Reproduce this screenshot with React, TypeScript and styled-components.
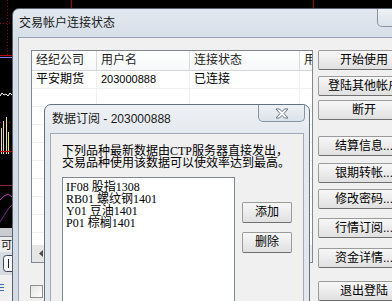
import React from "react";
import styled, { createGlobalStyle } from "styled-components";

const UI_FONT = `"Liberation Sans", "Noto Sans CJK SC", sans-serif`;
const SONG_FONT = `"Liberation Serif", "Noto Sans CJK SC", serif`;

const GlobalStyle = createGlobalStyle`
  html, body {
    margin: 0;
    padding: 0;
    background: #000;
  }
  body {
    font-family: ${UI_FONT};
    font-size: 12px;
    color: #000;
  }
`;

interface Column {
  title: string;
  width: number;
}

const columns: Column[] = [
  { title: "经纪公司", width: 65 },
  { title: "用户名", width: 93 },
  { title: "连接状态", width: 110 },
  { title: "用户类型", width: 90 },
];

const accounts = [["平安期货", "203000888", "已连接", ""]];

// gap above each button, px
const actions = [
  { label: "开始使用", top: 0 },
  { label: "登陆其他帐户", top: 6 },
  { label: "断开", top: 4 },
  { label: "结算信息...", top: 16 },
  { label: "银期转帐...", top: 7 },
  { label: "修改密码...", top: 6 },
  { label: "行情订阅...", top: 9 },
  { label: "资金详情...", top: 10 },
  { label: "退出登陆", top: 13 },
];

const subscriptions = ["IF08 股指1308", "RB01 螺纹钢1401", "Y01 豆油1401", "P01 棕榈1401"];

function CloseIcon() {
  return (
    <svg width="14" height="11" viewBox="0 0 14 11">
      <polygon
        points="1,1 4.5,1 7,3.6 9.5,1 13,1 9,5.5 13,10 9.5,10 7,7.4 4.5,10 1,10 5,5.5"
        fill="#fff"
        stroke="#6a7582"
        strokeWidth="1"
        strokeLinejoin="round"
      />
    </svg>
  );
}

function Backdrop() {
  return (
    <BackdropSvg viewBox="0 0 392 301">
      <rect width="392" height="301" fill="#000" />
      <line x1="71.5" y1="0" x2="71.5" y2="8" stroke="#b00000" />
      <line x1="313.5" y1="0" x2="313.5" y2="8" stroke="#b00000" />
      <line x1="7.5" y1="0" x2="7.5" y2="60" stroke="#9a0000" strokeDasharray="1 2" />
      <line x1="0" y1="23.5" x2="12" y2="23.5" stroke="#9a0000" strokeDasharray="1 2" />
      <line x1="0" y1="55.5" x2="12" y2="55.5" stroke="#c00000" />
      <line x1="0" y1="57.5" x2="12" y2="57.5" stroke="#7a88ff" />
      <polyline points="0,96 2,93 4,95 6,94 8,96 10,93 12,95" fill="none" stroke="#fff" />
      <line x1="0" y1="122.5" x2="12" y2="122.5" stroke="#b00000" strokeDasharray="1 2" />
      <rect x="1" y="128" width="1" height="26" fill="#e8e070" />
      <rect x="3" y="121" width="1" height="33" fill="#e8e070" />
      <rect x="6" y="117" width="1" height="37" fill="#e8e070" />
      <rect x="8" y="132" width="1" height="22" fill="#e8e070" />
      <line x1="0" y1="151.5" x2="12" y2="151.5" stroke="#c00000" />
      <line x1="0" y1="185.5" x2="12" y2="185.5" stroke="#902040" />
      <polyline points="0,200 4,196 8,194 12,197" fill="none" stroke="#b040b0" />
      <polyline points="0,222 5,214 9,208 12,205" fill="none" stroke="#7a2a8a" />
      <rect x="0" y="228" width="12" height="8" fill="#c9ccd1" />
      <rect x="0" y="236" width="12" height="16" fill="#ececec" />
      <line x1="0" y1="236.5" x2="12" y2="236.5" stroke="#7d8590" />
      <text x="1" y="249" fontSize="11" fontFamily="Noto Sans CJK SC, sans-serif" fill="#111">
        可
      </text>
      <rect x="0" y="252" width="12" height="23" fill="#d7dce3" />
      <rect x="3.5" y="255.5" width="12" height="16" rx="3" fill="#f6f8fb" stroke="#3c4654" />
      <line x1="8.5" y1="259" x2="8.5" y2="268" stroke="#222" />
      <rect x="0" y="275" width="12" height="26" fill="#f0f0f0" />
      <line x1="0" y1="284.5" x2="4" y2="284.5" stroke="#3a6fc0" />
      <line x1="0" y1="287.5" x2="4" y2="287.5" stroke="#3a6fc0" />
      <line x1="0" y1="290.5" x2="4" y2="290.5" stroke="#3a6fc0" />
    </BackdropSvg>
  );
}

export default function App() {
  return (
    <>
      <GlobalStyle />
      <Desktop>
        <Backdrop />

        <MainWindow>
          <TitleBar>
            <Caption>交易帐户连接状态</Caption>
            <CloseButton>
              <CloseIcon />
            </CloseButton>
          </TitleBar>
          <Client>
            <LeftPane>
              <ListView>
                <HeaderRow>
                  {columns.map((c) => (
                    <HeaderCell key={c.title} $width={c.width}>
                      {c.title}
                    </HeaderCell>
                  ))}
                </HeaderRow>
                <Rows>
                  {accounts.map((row, i) => (
                    <Row key={i}>
                      {row.map((v, j) => (
                        <Cell key={j} $width={columns[j].width} $num={/^\d+$/.test(v)}>
                          {v}
                        </Cell>
                      ))}
                    </Row>
                  ))}
                  {Array.from({ length: 11 }).map((_, i) => (
                    <Row key={`e${i}`}>
                      {columns.map((c) => (
                        <Cell key={c.title} $width={c.width} />
                      ))}
                    </Row>
                  ))}
                </Rows>
                <HScroll>
                  <ScrollArrow>
                    <svg width="4" height="7" viewBox="0 0 4 7">
                      <polygon points="4,0 0,3.5 4,7" fill="#4d4d4d" />
                    </svg>
                  </ScrollArrow>
                  <ScrollTrack />
                </HScroll>
              </ListView>
              <CheckBox />
            </LeftPane>
            <ActionColumn>
              {actions.map((a) => (
                <ActionButton key={a.label} $top={a.top}>
                  {a.label}
                </ActionButton>
              ))}
            </ActionColumn>
          </Client>
        </MainWindow>

        <Dialog>
          <DialogTitleBar>
            <DialogCaption>数据订阅 - 203000888</DialogCaption>
            <DialogClose>
              <CloseIcon />
            </DialogClose>
          </DialogTitleBar>
          <DialogClient>
            <Notice>
              下列品种最新数据由CTP服务器直接发出，
              <br />
              交易品种使用该数据可以使效率达到最高。
            </Notice>
            <SubscribeRow>
              <ListBox>
                {subscriptions.map((s) => (
                  <ListItem key={s}>{s}</ListItem>
                ))}
              </ListBox>
              <SideButtons>
                <SmallButton>添加</SmallButton>
                <SmallButton>删除</SmallButton>
              </SideButtons>
            </SubscribeRow>
          </DialogClient>
        </Dialog>
      </Desktop>
    </>
  );
}

const Desktop = styled.div`
  position: relative;
  width: 392px;
  height: 301px;
  overflow: hidden;
  background: #000;
`;

const BackdropSvg = styled.svg`
  position: absolute;
  left: 0;
  top: 0;
  width: 392px;
  height: 301px;
`;

const MainWindow = styled.section`
  position: absolute;
  left: 12px;
  top: 8px;
  width: 418px;
  height: 320px;
  box-sizing: border-box;
  border: 1px solid #58626e;
  border-radius: 7px 7px 0 0;
  background: linear-gradient(#e2e8ef, #d6dee8 30px, #d3dbe5);
  display: flex;
  flex-direction: column;
`;

const TitleBar = styled.div`
  height: 28px;
  display: flex;
  align-items: flex-start;
  padding-left: 6px;
  flex-shrink: 0;
`;

const Caption = styled.div`
  align-self: center;
  font-family: ${UI_FONT};
  font-size: 12px;
  line-height: 14px;
  color: #1a1a1a;
`;

const CloseButton = styled.div`
  margin-left: auto;
  margin-right: 5px;
  width: 47px;
  height: 18px;
  box-sizing: border-box;
  border: 1px solid #8593a3;
  border-top: none;
  border-radius: 0 0 5px 5px;
  background: linear-gradient(#eef2f6, #dbe2ea);
  display: flex;
  align-items: center;
  justify-content: center;
`;

const Client = styled.div`
  flex: 1;
  margin: 0 5px;
  border: 1px solid #98a3b0;
  border-bottom: none;
  background: #f0f0f0;
  display: grid;
  grid-template-columns: 282px 92px;
  column-gap: 5px;
  align-items: start;
  padding: 12px 0 0 12px;
`;

const LeftPane = styled.div`
  display: flex;
  flex-direction: column;
`;

const ListView = styled.div`
  height: 213px;
  box-sizing: border-box;
  border: 1px solid #828790;
  background: #fff;
  display: flex;
  flex-direction: column;
  overflow: hidden;
`;

const HeaderRow = styled.div`
  display: flex;
  height: 19px;
  flex-shrink: 0;
  border-bottom: 1px solid #d5d5d5;
  background: linear-gradient(#ffffff, #f7f8f9);
`;

const HeaderCell = styled.div<{ $width: number }>`
  flex: 0 0 ${(p) => p.$width}px;
  box-sizing: border-box;
  border-right: 1px solid #dadada;
  padding-left: 4px;
  font-size: 12px;
  line-height: 19px;
  color: #222;
  white-space: nowrap;
  overflow: hidden;
`;

const Rows = styled.div`
  flex: 1;
  overflow: hidden;
`;

const Row = styled.div`
  display: flex;
  height: 17px;
  border-bottom: 1px solid #f0f0f0;
`;

const Cell = styled.div<{ $width: number; $num?: boolean }>`
  flex: 0 0 ${(p) => p.$width}px;
  box-sizing: border-box;
  border-right: 1px solid #f0f0f0;
  padding-left: 4px;
  font-size: ${(p) => (p.$num ? 11 : 12)}px;
  line-height: 17px;
  white-space: nowrap;
  overflow: hidden;
`;

const HScroll = styled.div`
  height: 17px;
  flex-shrink: 0;
  display: flex;
  background: #eaeaea;
`;

const ScrollArrow = styled.div`
  width: 17px;
  display: flex;
  align-items: center;
  justify-content: center;
  background: #e6e6e6;
`;

const ScrollTrack = styled.div`
  flex: 1;
  background: #ececec;
`;

const CheckBox = styled.div`
  width: 13px;
  height: 13px;
  box-sizing: border-box;
  margin: 22px 0 0 -1px;
  border: 1px solid #8e8f8f;
  background: linear-gradient(135deg, #e4e4e4, #fdfdfd);
`;

const ActionColumn = styled.div`
  display: flex;
  flex-direction: column;
`;

const ActionButton = styled.div<{ $top: number }>`
  margin-top: ${(p) => p.$top}px;
  height: 20px;
  box-sizing: border-box;
  border: 1px solid #9b9b9b;
  border-bottom-color: #707070;
  border-radius: 2px;
  background: linear-gradient(#f7f7f7, #ececec 50%, #e0e0e0);
  font-size: 12px;
  line-height: 18px;
  text-align: center;
  white-space: nowrap;
`;

const Dialog = styled.section`
  position: absolute;
  left: 44px;
  top: 104px;
  width: 266px;
  height: 215px;
  box-sizing: border-box;
  border: 1px solid #66717e;
  border-radius: 7px 7px 0 0;
  background: linear-gradient(#eef1f5, #e4e9ef 30px, #e2e7ed);
  display: flex;
  flex-direction: column;
`;

const DialogTitleBar = styled.div`
  height: 28px;
  flex-shrink: 0;
  display: flex;
  align-items: flex-start;
  padding-left: 7px;
`;

const DialogCaption = styled.div`
  align-self: center;
  font-size: 12px;
  line-height: 14px;
  color: #1a1a1a;
`;

const DialogClose = styled(CloseButton)`
  margin-right: 4px;
  height: 17px;
`;

const DialogClient = styled.div`
  flex: 1;
  margin: 0 5px;
  border: 1px solid #a0a9b4;
  border-bottom: none;
  background: #f0f0f0;
  padding: 11px 0 0 11px;
`;

const Notice = styled.p`
  margin: 0;
  font-family: ${SONG_FONT};
  font-size: 12px;
  line-height: 12px;
  white-space: nowrap;
`;

const SubscribeRow = styled.div`
  display: flex;
  align-items: flex-start;
  margin-top: 8px;
`;

const ListBox = styled.div`
  width: 173px;
  height: 140px;
  box-sizing: border-box;
  border: 1px solid #828790;
  background: #fff;
  padding: 3px 3px;
`;

const ListItem = styled.div`
  font-family: ${SONG_FONT};
  font-size: 12px;
  line-height: 12px;
  white-space: nowrap;
`;

const SideButtons = styled.div`
  display: flex;
  flex-direction: column;
  gap: 9px;
  margin: 25px 0 0 7px;
`;

const SmallButton = styled(ActionButton).attrs({ $top: 0 })`
  width: 50px;
  height: 21px;
  line-height: 19px;
`;
